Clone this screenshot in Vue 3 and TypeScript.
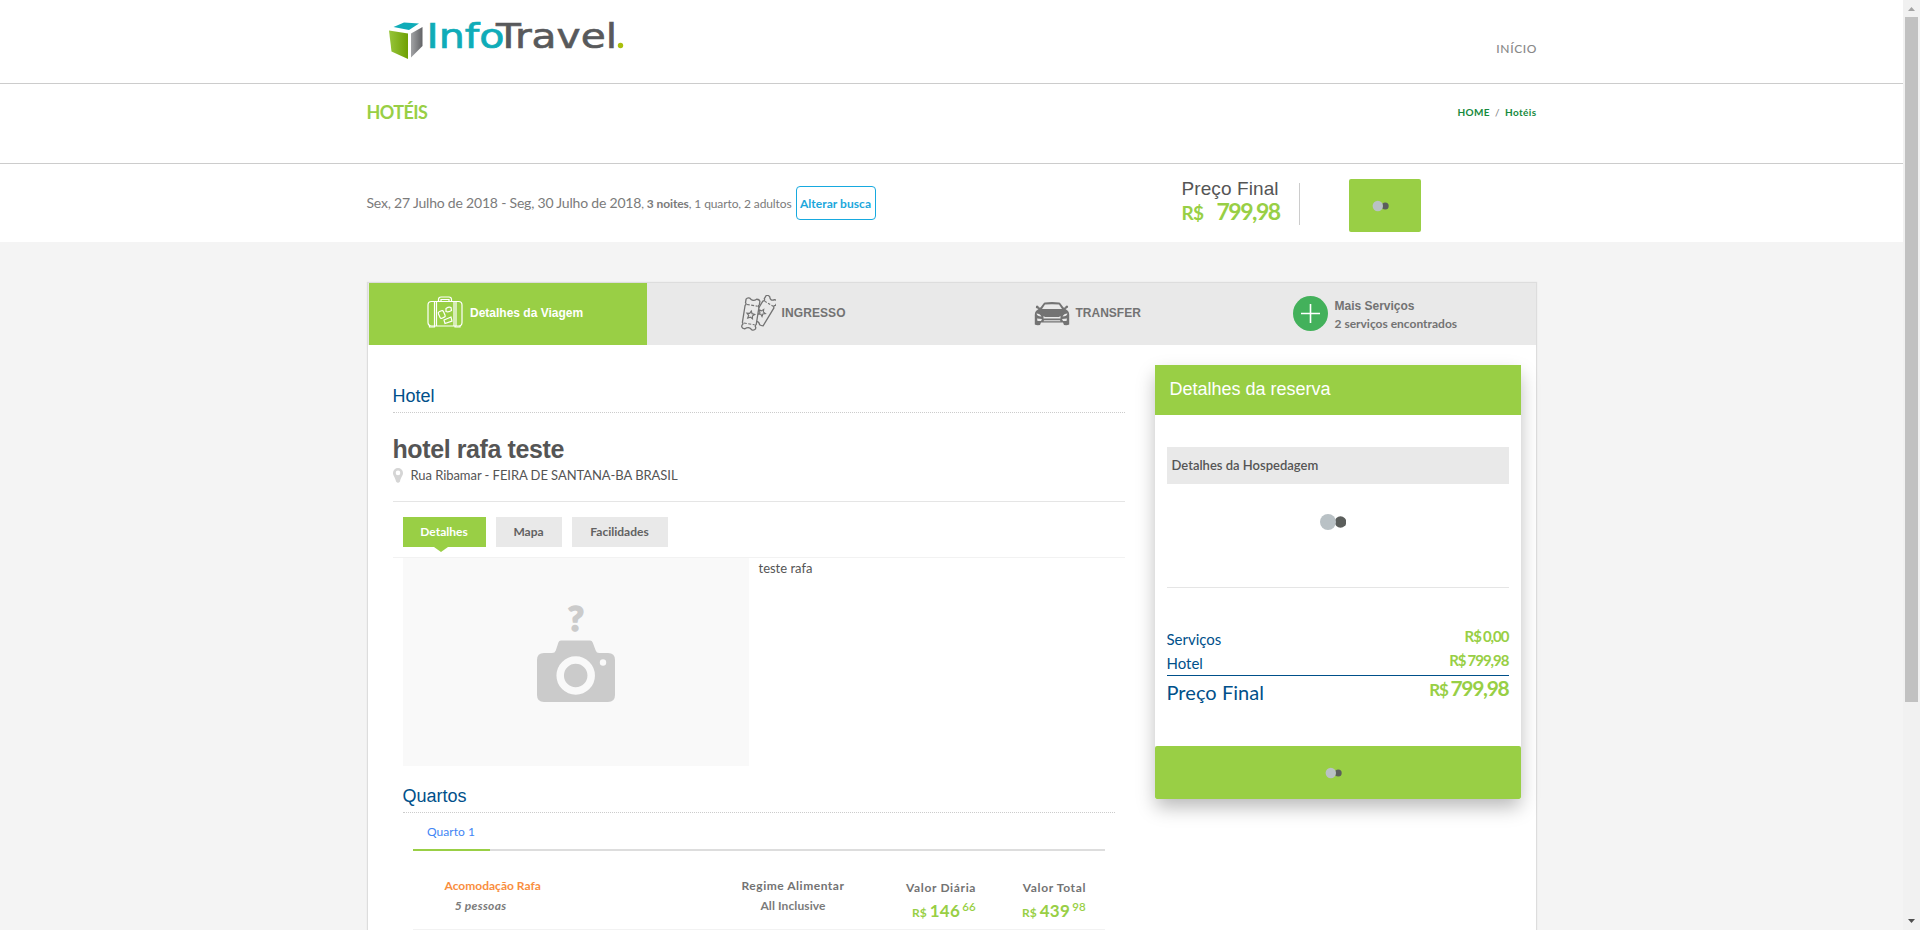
<script setup lang="ts">
interface Service { label: string; note?: string; icon: string; pad: number }
const services: Service[] = [
  { label: 'Detalhes da Viagem', icon: 'bag', pad: 58.5 },
  { label: 'INGRESSO', icon: 'ticket', pad: 93 },
  { label: 'TRANSFER', icon: 'car', pad: 95 },
  { label: 'Mais Serviços', note: '2 serviços encontrados', icon: 'plus', pad: 62 },
]
const hotelTabs = ['Detalhes', 'Mapa', 'Facilidades']
const totals = [
  { label: 'Serviços', value: '0,00' },
  { label: 'Hotel', value: '799,98' },
]
</script>

<template>
  <div class="screen">
    <div class="page">
      <header class="top">
        <div class="wrap between">
          <svg class="logo" width="240" height="58" viewBox="0 -12 240 58">
            <defs>
              <linearGradient id="cubeL"><stop offset="0" stop-color="#97c53b" /><stop offset="1" stop-color="#6fa003" /></linearGradient>
              <linearGradient id="cubeR"><stop offset="0" stop-color="#a2a3a5" /><stop offset="1" stop-color="#626366" /></linearGradient>
            </defs>
            <path d="M4.500 9 L15 4.500 L30 5.500 L20 12Z" fill="#0facb8" />
            <path d="M0 12.500 L19 15.500 L19 41 L2.500 33.500Z" fill="url(#cubeL)" />
            <path d="M22 15.500 L33.500 9 L33.500 28 L22 39.500Z" fill="url(#cubeR)" />
            <text x="37.500" y="29.500" class="brand teal" textLength="78" lengthAdjust="spacingAndGlyphs">Info</text>
            <text x="107" y="29.500" class="brand gray" textLength="121" lengthAdjust="spacingAndGlyphs">Travel</text>
            <circle cx="231.500" cy="27.500" r="2.700" fill="#a9bf0c" />
          </svg>
          <a class="start">INÍCIO</a>
        </div>
      </header>
      <div class="crumbs">
        <div class="wrap between">
          <h1>HOTÉIS</h1>
          <p class="trail"><b>HOME</b><i>/</i><b>Hotéis</b></p>
        </div>
      </div>
      <div class="search">
        <div class="wrap row">
          <p class="stay"><span class="dates">Sex, 27 Julho de 2018 - Seg, 30 Julho de 2018</span><span class="guests">, <b>3 noites</b>, 1 quarto, 2 adultos</span></p>
          <a class="change">Alterar busca</a>
          <div class="final">
            <span class="final-label">Preço Final</span>
            <span class="final-price"><small>R$</small><b>799,98</b></span>
          </div>
          <div class="go">
            <svg width="18" height="12" viewBox="0 0 18 12"><circle cx="13.200" cy="6" r="3.500" fill="#5b5e5c" /><circle cx="5.800" cy="6" r="5.200" fill="#b9c1c5" /></svg>
          </div>
        </div>
      </div>

      <main class="panel">
        <nav class="services">
          <div v-for="(s, i) in services" :key="s.label" class="service" :class="{ on: i === 0, [s.icon]: true }" :style="{ paddingLeft: s.pad + 'px' }">
            <svg v-if="s.icon === 'bag'" class="ic" width="36" height="32" viewBox="0 0 36 32" fill="none" stroke="#fff" stroke-width="1.200">
              <rect x="1" y="5.500" width="34" height="24.500" rx="3.500" />
              <path d="M7.500 5.500V30M9.500 6V30M27 5.500V30M29 6V30M2.500 30v1h5v-1M28 30v1h5v-1M11.500 5V3.500q0-2.500 2.500-2.500h8q2.500 0 2.500 2.500V5M14 5V3.500h8V5" />
              <rect x="12" y="15" width="5.500" height="7" rx="1.500" transform="rotate(-24 14.700 18.500)" />
              <path d="M19 12.500q3-2 5-1l.5 3q-3 2-5.500 1zM17 24l7-3 1 4-7 2.500z" />
            </svg>
            <svg v-else-if="s.icon === 'ticket'" class="ic" width="36" height="36" viewBox="0 0 36 36" fill="#e9e9e9" stroke="#737373" stroke-width="1.300">
              <g transform="translate(24.500 16) rotate(31)">
                <path d="M-6.500-14.500q1.500-1 3.500-.5Q0-11 3-15q2-.5 3.500.5v4q-2 1.500 0 3V13.500q-2 1-3.500.8Q0 11 -3 14.300-5 14.500-6.500 13.500V-7.500q2-1.500 0-3Z" />
                <path d="M-5-8.500H5" stroke-dasharray="2.500 1.500" stroke-width="1.100" />
                <path d="M-1.500-1l1 2.400 2.600.3-2 1.700.6 2.600-2.200-1.400-2.300 1.400.6-2.600-2-1.700 2.600-.3Z" stroke-width="1.100" />
              </g>
              <g transform="translate(10.800 19) rotate(9)">
                <path d="M-7-14q1-2 3.500-1.500Q0-12 3.500-15.500 6-16 7-14v3.500q-1.500 1.500 0 3V9.500q-1.500 1.500 0 3V14q-1 1.800-3.500 1.500Q0 12-3.500 15.500-6 16-7 14v-1.500q1.500-1.500 0-3V-7.500q1.500-1.500 0-3Z" />
                <path d="M-5.500-8.800H5.500M-5.500 10H5.500" stroke-dasharray="3 1.500" stroke-width="1.100" />
                <path d="M0-3l1.200 2.500 2.700.3-2 1.900.5 2.700L0 3.100l-2.400 1.300.5-2.700-2-1.900 2.700-.3Z" stroke-width="1.200" />
              </g>
            </svg>
            <svg v-else-if="s.icon === 'car'" class="ic" width="36" height="24" viewBox="0 0 36 24" fill="#737373">
              <path fill-rule="evenodd" d="M11 .5Q18-.3 25 .5 26 .7 26.500 1.500L29.500 5.500 31 5.500Q31.500 3.500 33 3.500 34.500 3.800 34 5.500L32.500 6.500 31.500 7 34 9Q35.500 11 35.200 14V22.500Q33.500 23.500 30 23L29 20.500H7L6 23Q2.500 23.500 .8 22.500V14Q.5 11 2 9L4.500 7 2 6Q1.500 3.800 3 3.500 4.500 3.500 5 5.500L6.500 5.500 9.500 1.500Q10 .7 11 .5ZM11 2.500L8 7h20L25 2.500Q18 1.800 11 2.500ZM2.500 11.500q.5 3 5 3Q6 11.500 2.500 11.500ZM33.500 11.500q-3.500 0-5 3 4.500 0 5-3ZM9.500 14v2.500h17V14l-1.500 1H11ZM3 16.500l.5 2.500h3.500l1-2ZM33 16.500l-5 .5 1 2h3.500ZM10 18.200l-.5 1h17l-.5-1Z" />
            </svg>
            <svg v-else class="ic" width="35" height="35" viewBox="0 0 35 35"><circle cx="17.500" cy="17.500" r="17.500" fill="#43b15b" /><path d="M17.500 8v19M8 17.500h19" stroke="#fff" stroke-width="1.600" /></svg>
            <div class="service-text"><span>{{ s.label }}</span><em v-if="s.note">{{ s.note }}</em></div>
          </div>
        </nav>

        <div class="cols">
          <section class="left">
            <h2 class="sec">Hotel</h2>
            <h3 class="name">hotel rafa teste</h3>
            <p class="address">
              <svg width="10" height="15" viewBox="0 0 10 15"><path fill-rule="evenodd" fill="#d5d5d5" d="M5 0a5 5 0 0 1 5 5c0 2.800-2.300 4.500-3 8.500Q5 16 3 13.500C2.300 9.500 0 7.800 0 5a5 5 0 0 1 5-5Zm0 2.600a2.300 2.300 0 1 0 0 4.600 2.300 2.300 0 0 0 0-4.600Z" /></svg>
              <span>Rua Ribamar - FEIRA DE SANTANA-BA BRASIL</span>
            </p>
            <div class="hotel-tabs"><a v-for="(t, i) in hotelTabs" :key="t" :class="[{ on: i === 0 }, 'w' + i]">{{ t }}</a></div>
            <div class="about">
              <div class="photo">
                <svg width="346" height="208" viewBox="0 0 346 208">
                  <text x="173" y="73" text-anchor="middle" class="question">?</text>
                  <path fill="#cbcbcb" d="M158 82.500h29q2 0 2.700 2l3 8q.8 2.500 3.500 2.500H205q7 0 7 7v35q0 7-7 7H141q-7 0-7-7v-35q0-7 7-7h8q3 0 3.800-2.500l2.600-8q.6-2 2.600-2Z" />
                  <circle cx="172.700" cy="117.500" r="15.500" fill="none" stroke="#f9f9f9" stroke-width="7.500" />
                  <circle cx="200" cy="104.500" r="3.200" fill="#f9f9f9" />
                </svg>
              </div>
              <p>teste rafa</p>
            </div>
            <div class="rooms">
              <h2 class="sec">Quartos</h2>
              <div class="room-tabs"><a>Quarto 1</a></div>
              <div class="room">
                <div class="c1"><b>Acomodação Rafa</b><i>5 pessoas</i></div>
                <div class="c2"><b>Regime Alimentar</b><span>All Inclusive</span></div>
                <div class="c3"><b>Valor Diária</b><p><small>R$</small><strong>146</strong><sup>66</sup></p></div>
                <div class="c4"><b>Valor Total</b><p><small>R$</small><strong>439</strong><sup>98</sup></p></div>
              </div>
            </div>
          </section>

          <aside class="booking">
            <h2>Detalhes da reserva</h2>
            <div class="body">
              <div class="lodging">Detalhes da Hospedagem</div>
              <div class="wait"><svg width="26" height="16" viewBox="0 0 26 16"><circle cx="20.500" cy="8" r="5.800" fill="#5b5e5c" /><circle cx="8" cy="8" r="8" fill="#b9c1c5" /></svg></div>
              <div v-for="t in totals" :key="t.label" class="total"><span>{{ t.label }}</span><b><small>R$</small>{{ t.value }}</b></div>
              <div class="total grand"><span>Preço Final</span><b><small>R$</small>799,98</b></div>
            </div>
            <div class="reserve">
              <svg width="18" height="12" viewBox="0 0 18 12"><circle cx="13.200" cy="6" r="3.500" fill="#5b5e5c" /><circle cx="5.800" cy="6" r="5.200" fill="#b9c1c5" /></svg>
            </div>
          </aside>
        </div>
      </main>
    </div>
    <div class="bar">
      <svg width="17" height="17"><path d="M5 11h7L8.500 7Z" fill="#a3a3a3" /></svg>
      <div class="thumb"></div>
      <svg width="17" height="17"><path d="M5 6h7L8.500 10Z" fill="#505050" /></svg>
    </div>
  </div>
</template>

<style>
body { margin: 0; overflow: hidden; }
</style>
<style scoped>
.screen { display: flex; width: 1920px; height: 930px; overflow: hidden; font-family: Lato, "Liberation Sans", sans-serif; color: #7b7b7b; }
.screen *, .screen { box-sizing: border-box; }
h1, h2, h3, p { margin: 0; font-weight: 400; }
b { font-weight: 700; }
svg { display: block; flex: none; }
.page { width: 1903px; height: 930px; overflow: hidden; background: #f4f4f4; }
.wrap { display: flex; width: 1170px; margin: 0 auto; }
.between { justify-content: space-between; }
.top { height: 84px; background: #fff; border-bottom: 1px solid #ccc; }
.logo { margin: 6px 0 0 22px; overflow: visible; }
.brand { font: 33px "DejaVu Sans", sans-serif; }
.teal { fill: #0facb8; stroke: #0facb8; stroke-width: .7; }
.gray { fill: #58595b; stroke: #58595b; stroke-width: .6; }
.start { margin-top: 39px; font-size: 12px; line-height: 20px; letter-spacing: .6px; margin-right: -.5px; color: #888; font-weight: 500; }
.crumbs { height: 80px; background: #fff; border-bottom: 1px solid #ccc; }
.crumbs h1 { margin-top: 18px; font-size: 18px; line-height: 20px; letter-spacing: -.6px; font-weight: 700; color: #98cf45; }
.trail { display: flex; gap: 5px; margin-top: 18px; font-size: 10px; line-height: 20px; letter-spacing: .4px; }
.trail b { color: #168a3d; }
.trail i { font-style: normal; }
.search { height: 78px; background: #fff; }
.row { height: 78px; align-items: flex-start; }
.stay { width: 429px; margin-top: 29px; line-height: 20px; font-size: 12px; white-space: nowrap; }
.dates { font-size: 14px; letter-spacing: -.2px; }
.guests { letter-spacing: -.1px; }
.change { width: 80px; height: 34px; margin-top: 22px; border: 1px solid #17a9df; border-radius: 4px; color: #1ba7dc; font-size: 12px; font-weight: 700; line-height: 34px; letter-spacing: .05px; text-align: center; white-space: nowrap; }
.final { display: flex; flex-direction: column; width: 118px; height: 42px; margin: 19px 0 0 306px; border-right: 1px solid #ccc; white-space: nowrap; }
.final-label { margin-top: -5px; font: 19px/22px "Liberation Sans", sans-serif; letter-spacing: .1px; color: #555; }
.final-price { display: flex; align-items: baseline; margin-top: -1px; color: #98cf45; line-height: 24px; }
.final-price small { width: 35px; font-size: 19px; font-weight: 700; letter-spacing: -.6px; }
.final-price b { font-size: 23px; letter-spacing: -1.500px; }
.go { display: flex; justify-content: center; align-items: center; width: 72px; height: 53px; margin: 15px 0 0 49px; background: #99cf45; border-radius: 2px; padding-right: 8px; }
.panel { width: 1170px; height: 700px; margin: 40px auto 0; border: 1px solid #ddd; border-width: 1px 1px 0 1px; background: #fff; box-shadow: 0 0 1px #ddd; }
.services { display: flex; height: 62px; background: #e9e9e9; }
.service { display: flex; align-items: center; width: 292px; padding-bottom: 1px; }
.service.on { width: 278px; background: #99cf45; color: #fff; margin-left: 1px; }
.ic { margin-right: 6px; }
.plus .ic { margin-right: 7px; }
.bag .ic { margin: -3px 7px 0 0; }
.ticket .ic { margin-top: -2px; }
.service-text { display: flex; flex-direction: column; padding-bottom: 2px; font: 700 12px/18px "Liberation Sans", sans-serif; white-space: nowrap; color: #737373; }
.ticket .service-text { letter-spacing: .1px; }
.plus .service-text { padding: 2px 0 0; }
.on .service-text { color: #fff; }
.service-text em { font: 700 12px/18px Lato, sans-serif; }
.cols { display: flex; align-items: flex-start; }
.left { width: 732px; margin-left: 25px; padding-top: 37px; }
.sec { height: 31px; border-bottom: 1px dotted #ccc; font: 18px/28px "Liberation Sans", sans-serif; color: #00508a; }
.name { margin-top: 21px; font: 700 25px/30px "Liberation Sans", sans-serif; color: #555; letter-spacing: -.4px; }
.address { display: flex; align-items: center; gap: 8px; height: 38px; padding-bottom: 15px; border-bottom: 1px solid #e5e5e5; font-size: 13px; letter-spacing: -.06px; color: #555; }
.hotel-tabs { display: flex; gap: 10px; height: 56px; padding: 15px 10px; border-bottom: 1px solid #f2f2f2; }
.hotel-tabs a { position: relative; height: 30px; background: #e9e9e9; font-size: 12px; font-weight: 700; line-height: 30px; text-align: center; color: #626262; }
.w0 { width: 83px; } .w1 { width: 66px; } .w2 { width: 96px; }
.hotel-tabs a.on { background: #99cf45; color: #fff; }
.hotel-tabs a.on::after { content: ""; position: absolute; left: 31px; top: 30px; border: 7px solid transparent; border-top: 5px solid #99cf45; border-bottom: 0; }
.about { display: flex; height: 208px; padding-left: 10px; gap: 10px; color: #555; font-size: 13px; line-height: 20px; }
.photo { width: 346px; background: #f9f9f9; }
.question { font: 900 35px Lato, sans-serif; fill: #cbcbcb; stroke: #cbcbcb; stroke-width: 1.500; }
.rooms { width: 712px; margin: 16px 0 0 10px; }
.room-tabs { width: 692px; height: 38px; margin-left: 10px; border-bottom: 2px solid #ddd; }
.room-tabs a { display: block; width: 77px; height: 38px; border-bottom: 2px solid #99cf45; text-align: center; font-size: 12px; line-height: 38px; letter-spacing: .05px; color: #4285f4; }
.room { display: flex; width: 692px; height: 79px; margin-left: 10px; border-bottom: 1px solid #f2f2f2; font-size: 12px; line-height: 20px; white-space: nowrap; letter-spacing: .3px; text-align: center; padding-top: 25px; }
.room > div { display: flex; flex-direction: column; }
.room b { color: #737373; letter-spacing: .52px; }
.room .c1 b { color: #f98e3e; text-align: left; letter-spacing: 0; }
.c1 { width: 300px; padding-left: 32px; }
.c1 i { width: 72px; font-weight: 700; margin-left: 0; }
.c2 { width: 161px; }
.c2 span { font-weight: 700; letter-spacing: .1px; }
.room .c3, .room .c4 { align-items: flex-end; padding-top: 2px; }
.room .c3 b, .room .c4 b { letter-spacing: .65px; margin-right: -.6px; }
.c3 { width: 102px; }
.c4 { width: 110px; }
.room p { display: flex; align-items: baseline; gap: 3px; margin: 3px -.6px 0 0; color: #98cf45; }
.room small { font-size: 12px; font-weight: 700; letter-spacing: 0; }
.room strong { font-size: 17px; }
.room sup { font-size: 11.500px; line-height: 10px; vertical-align: baseline; transform: translateY(-6px); font-weight: 600; margin-left: -1px; }
.booking { width: 366px; margin: 20px 0 0 30px; box-shadow: 0 9px 18px -1px rgba(0,0,0,.28); background: #fff; }
.booking h2 { height: 50px; padding-left: 15px; background: #99cf45; color: #fff; font: 18px/48px "Liberation Sans", sans-serif; }
.body { height: 331px; padding: 32px 12px 0; }
.lodging { height: 37px; padding-left: 5px; background: #e9e9e9; font-size: 13px; font-weight: 600; line-height: 36px; color: #555; }
.wait { height: 104px; margin-bottom: 39px; padding: 30px 0 0 153px; border-bottom: 1px solid #e5e5e5; }
.total { display: flex; justify-content: space-between; height: 24px; font-size: 15px; line-height: 24px; color: #00508a; white-space: nowrap; }
.total b { margin-top: -3px; color: #98cf45; font-size: 15px; letter-spacing: -1px; }
.total small { font-size: 15px; margin-right: 2px; }
.grand { height: 40px; border-top: 1px solid #00508a; font-size: 20px; line-height: 32px; letter-spacing: .05px; }
.total.grand b { margin-top: -4px; font-size: 21px; letter-spacing: -1.300px; }
.total.grand small { font-size: 17px; margin-right: 3px; }
.reserve { display: flex; justify-content: center; align-items: center; height: 53px; padding-right: 8px; border-radius: 2px; background: #99cf45; }
.bar { display: flex; flex-direction: column; width: 17px; height: 930px; background: #f1f1f1; }
.thumb { width: 13px; height: 685px; margin: 0 2px auto; background: #c1c1c1; }
</style>
